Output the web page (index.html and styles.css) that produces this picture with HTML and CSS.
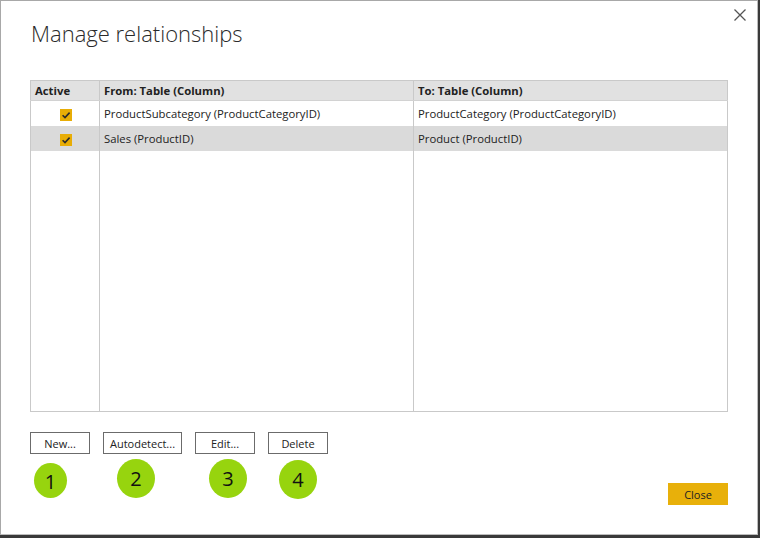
FILE: index.html
```html
<!DOCTYPE html>
<html>
<head>
<meta charset="utf-8">
<link rel="stylesheet" href="styles.css">
</head>
<body>
<div class="frame">
  <div class="dialog">
    <button class="close-x" aria-label="Close">
      <svg width="12" height="12" viewBox="0 0 12 12"><path d="M0.5 0.5 L11.5 11.5 M11.5 0.5 L0.5 11.5" stroke="#555" stroke-width="1.3" fill="none"/></svg>
    </button>
    <h1 class="title">Manage relationships</h1>
    <table class="rels">
      <colgroup><col class="c1"><col class="c2"><col class="c3"></colgroup>
      <thead>
        <tr><th>Active</th><th>From: Table (Column)</th><th>To: Table (Column)</th></tr>
      </thead>
      <tbody>
        <tr class="row">
          <td class="chk"><span class="box"><svg width="12" height="12" viewBox="0 0 12 12"><path d="M2.6 6.2 L5 8.6 L9.6 3.6" stroke="#2b2b2b" stroke-width="1.6" fill="none"/></svg></span></td>
          <td>ProductSubcategory (ProductCategoryID)</td>
          <td>ProductCategory (ProductCategoryID)</td>
        </tr>
        <tr class="row sel">
          <td class="chk"><span class="box"><svg width="12" height="12" viewBox="0 0 12 12"><path d="M2.6 6.2 L5 8.6 L9.6 3.6" stroke="#2b2b2b" stroke-width="1.6" fill="none"/></svg></span></td>
          <td>Sales (ProductID)</td>
          <td>Product (ProductID)</td>
        </tr>
        <tr class="filler"><td></td><td></td><td></td></tr>
      </tbody>
    </table>
    <div class="actions">
      <button class="btn b-new">New...</button>
      <button class="btn b-auto">Autodetect...</button>
      <button class="btn b-edit">Edit...</button>
      <button class="btn b-del">Delete</button>
    </div>
    <span class="badge n1">1</span>
    <span class="badge n2">2</span>
    <span class="badge n3">3</span>
    <span class="badge n4">4</span>
    <div class="footer">
      <button class="primary">Close</button>
    </div>
  </div>
</div>
</body>
</html>
```

FILE: styles.css
```css
html, body {
  margin: 0;
  padding: 0;
  background: #ffffff;
}
.frame {
  width: 760px;
  height: 538px;
  box-sizing: border-box;
  background: #3a3a3a;
  padding: 0 2px 3px 0;
}
.dialog {
  position: relative;
  box-sizing: border-box;
  height: 100%;
  background: #ffffff;
  border-left: 1px solid #a8a8a8;
  border-top: 1px solid #a8a8a8;
  border-right: 1px solid #bdbdbd;
  border-bottom: 1px solid #bdbdbd;
  padding: 0 29px 0 29px;
  font-family: "Open Sans", "DejaVu Sans", sans-serif;
  color: #222;
  display: flex;
  flex-direction: column;
}
.close-x {
  position: absolute;
  right: 11px;
  top: 8px;
  border: 0;
  background: transparent;
  padding: 0;
  width: 12px;
  height: 12px;
  display: block;
}
.close-x svg { display: block; }
.title {
  margin: 16px 0 0 1px;
  font-size: 22px;
  font-weight: 300;
  line-height: 32px;
  color: #2a2a2a;
  letter-spacing: 0;
}
.rels {
  margin-top: 31px;
  width: 698px;
  height: 332px;
  border-collapse: collapse;
  table-layout: fixed;
  border: 1px solid #c9c9c9;
  font-size: 11.3px;
}
.rels col.c1 { width: 69px; }
.rels col.c2 { width: 314px; }
.rels col.c3 { width: 314px; }
.rels th {
  background: #e1e1e1;
  height: 19px;
  padding: 0 0 0 4px;
  text-align: left;
  font-weight: 700;
  border-left: 1px solid #c9c9c9;
  border-bottom: 1px solid #d2d2d2;
  color: #222;
}
.rels td {
  padding: 0 0 1px 4px;
  border-left: 1px solid #c9c9c9;
  white-space: nowrap;
  color: #222;
}
.rels tr.row td { height: 24px; }
.rels tr.sel td { background: #dadada; }
.rels td.chk { padding: 0; text-align: center; }
.box {
  display: inline-block;
  width: 12px;
  height: 12px;
  background: #e8ad06;
  vertical-align: middle;
  margin-left: 1px;
}
.box svg { display: block; }
.rels tr.filler td { height: auto; }
.actions {
  margin-top: 20px;
  display: flex;
  gap: 13px;
}
.btn {
  height: 22px;
  box-sizing: border-box;
  border: 1px solid #6b6b6b;
  background: #ffffff;
  font-family: "Open Sans", "DejaVu Sans", sans-serif;
  font-size: 11px;
  color: #222;
  padding: 0;
}
.b-new { width: 60px; }
.b-auto { width: 79px; }
.b-edit { width: 60px; }
.b-del { width: 60px; }
.badge {
  position: absolute;
  width: 38px;
  height: 39px;
  border-radius: 50%;
  background: #97d40e;
  color: #111;
  font-family: "Open Sans", "DejaVu Sans", sans-serif;
  font-size: 20px;
  line-height: 39px;
  text-align: center;
}
.n1 { left: 33px; top: 462px; width: 33px; height: 35px; line-height: 37px; }
.n2 { left: 116px; top: 458px; }
.n3 { left: 208px; top: 458px; }
.n4 { left: 278px; top: 459px; }
.footer {
  margin-top: auto;
  margin-bottom: 29px;
  display: flex;
  justify-content: flex-end;
}
.primary {
  width: 60px;
  height: 22px;
  border: 0;
  background: #e8b00a;
  font-family: "Open Sans", "DejaVu Sans", sans-serif;
  font-size: 11px;
  color: #222;
  padding: 0;
}
```
